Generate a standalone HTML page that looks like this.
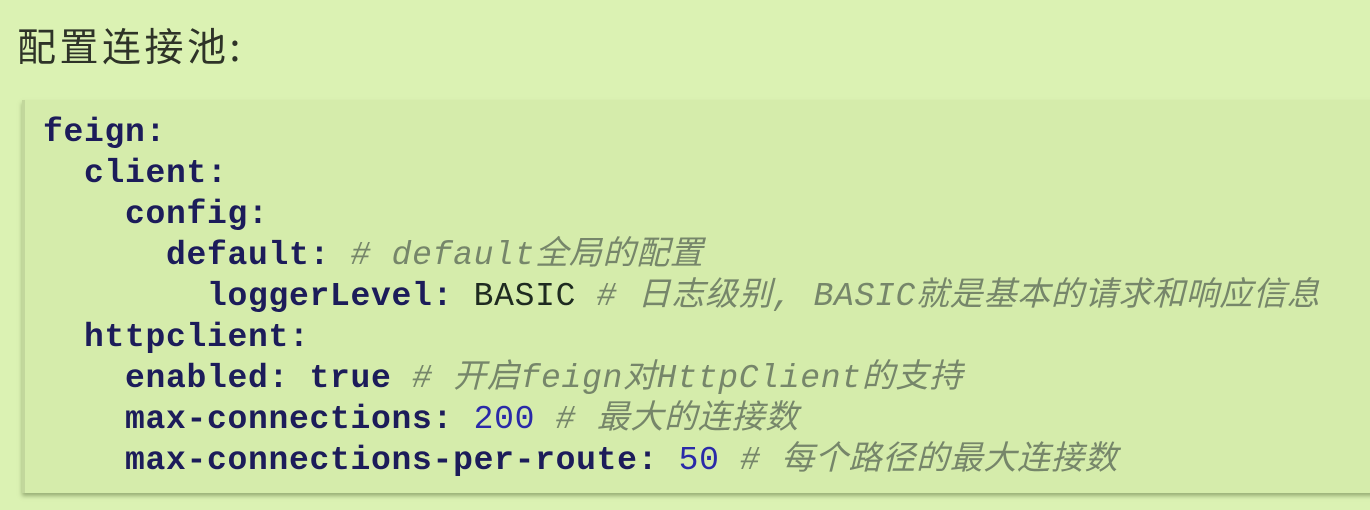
<!DOCTYPE html>
<html><head><meta charset="utf-8"><style>
html,body{margin:0;padding:0;width:1370px;height:510px;overflow:hidden;background:#dbf2b3;}
.t{position:absolute;left:17px;top:19px;font:39px "Noto Sans CJK SC","WenQuanYi Zen Hei",sans-serif;letter-spacing:3.5px;color:#2e3328;line-height:52px;}
.box{position:absolute;left:22px;top:100px;width:1360px;height:393px;background:#d5ecab;border-left:3px solid #c2d79c;box-shadow:0 3px 4px rgba(90,110,60,.5);}
pre{position:absolute;left:43px;top:112px;margin:0;font:bold 33px/41px "Liberation Mono","Noto Sans CJK SC",monospace;letter-spacing:0.7px;color:#1c1c5a;}
.c{font-weight:normal;font-style:italic;color:#76866a;}
.n{font-weight:normal;color:#2a2aa8;}
.v{font-weight:normal;color:#1e2a20;}
</style></head><body>
<div class="t">配置连接池:</div>
<div class="box"></div>
<pre>feign:
  client:
    config:
      default: <span class="c"># default全局的配置</span>
        loggerLevel: <span class="v">BASIC</span> <span class="c"># 日志级别, BASIC就是基本的请求和响应信息</span>
  httpclient:
    enabled: true <span class="c"># 开启feign对HttpClient的支持</span>
    max-connections: <span class="n">200</span> <span class="c"># 最大的连接数</span>
    max-connections-per-route: <span class="n">50</span> <span class="c"># 每个路径的最大连接数</span></pre>
</body></html>
